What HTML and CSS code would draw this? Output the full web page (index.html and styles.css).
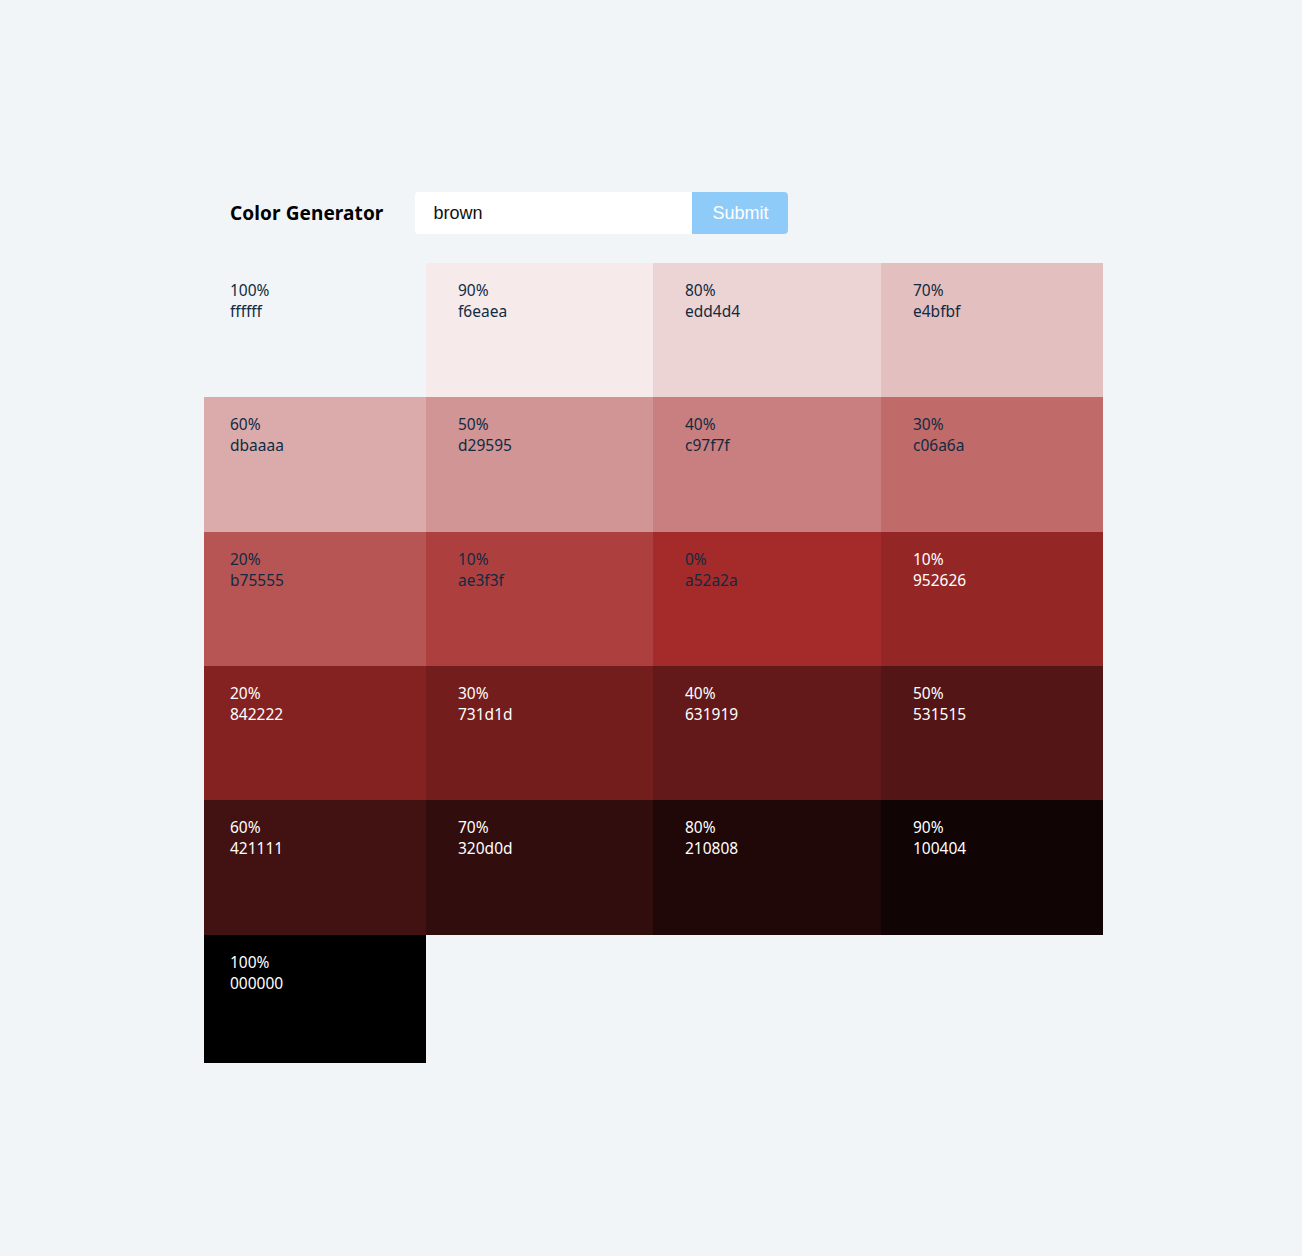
FILE: index.html
```html
<!DOCTYPE html>
<html>
<head>
<meta charset="utf-8">
<link rel="stylesheet" href="styles.css">
</head>
<body>
<main class="page">
  <section class="header">
    <h3 class="title">Color Generator</h3>
    <form class="form">
      <input class="input" type="text" value="brown">
      <button class="btn" type="button">Submit</button>
    </form>
  </section>
  <section class="colors">
    <article class="color blank"><p class="pct">100%</p><p class="hex">ffffff</p></article>
    <article class="color" style="background:#f6eaea"><p class="pct">90%</p><p class="hex">f6eaea</p></article>
    <article class="color" style="background:#edd4d4"><p class="pct">80%</p><p class="hex">edd4d4</p></article>
    <article class="color" style="background:#e4bfbf"><p class="pct">70%</p><p class="hex">e4bfbf</p></article>
    <article class="color" style="background:#dbaaaa"><p class="pct">60%</p><p class="hex">dbaaaa</p></article>
    <article class="color" style="background:#d29595"><p class="pct">50%</p><p class="hex">d29595</p></article>
    <article class="color" style="background:#c97f7f"><p class="pct">40%</p><p class="hex">c97f7f</p></article>
    <article class="color" style="background:#c06a6a"><p class="pct">30%</p><p class="hex">c06a6a</p></article>
    <article class="color" style="background:#b75555"><p class="pct">20%</p><p class="hex">b75555</p></article>
    <article class="color" style="background:#ae3f3f"><p class="pct">10%</p><p class="hex">ae3f3f</p></article>
    <article class="color" style="background:#a52a2a"><p class="pct">0%</p><p class="hex">a52a2a</p></article>
    <article class="color light" style="background:#952626"><p class="pct">10%</p><p class="hex">952626</p></article>
    <article class="color light" style="background:#842222"><p class="pct">20%</p><p class="hex">842222</p></article>
    <article class="color light" style="background:#731d1d"><p class="pct">30%</p><p class="hex">731d1d</p></article>
    <article class="color light" style="background:#631919"><p class="pct">40%</p><p class="hex">631919</p></article>
    <article class="color light" style="background:#531515"><p class="pct">50%</p><p class="hex">531515</p></article>
    <article class="color light" style="background:#421111"><p class="pct">60%</p><p class="hex">421111</p></article>
    <article class="color light" style="background:#320d0d"><p class="pct">70%</p><p class="hex">320d0d</p></article>
    <article class="color light" style="background:#210808"><p class="pct">80%</p><p class="hex">210808</p></article>
    <article class="color light" style="background:#100404"><p class="pct">90%</p><p class="hex">100404</p></article>
    <article class="color light" style="background:#000000"><p class="pct">100%</p><p class="hex">000000</p></article>
  </section>
</main>
</body>
</html>
```
FILE: styles.css
```css
* { box-sizing: border-box; }
html, body { margin: 0; padding: 0; }
body {
  background: #f1f5f8;
  font-family: "Noto Sans", "Open Sans", sans-serif;
  color: #102a42;
}
.page {
  width: 899px;
  margin-left: 204px;
  padding-top: 192px;
  padding-bottom: 193px;
}
.header {
  display: flex;
  align-items: center;
  padding-left: 26px;
  height: 42px;
}
.title {
  margin: 0 32px 0 0;
  font-size: 19px;
  font-weight: 700;
  color: #000;
  letter-spacing: 0.1px;
}
.form {
  display: flex;
  margin: 0;
}
.input {
  width: 277px;
  height: 42px;
  border: none;
  border-radius: 4px 0 0 4px;
  background: #fff;
  padding: 0 18px;
  font-family: "Liberation Sans", Arial, sans-serif;
  font-size: 18px;
  color: #111;
  outline: none;
}
.btn {
  width: 96px;
  height: 42px;
  border: none;
  border-radius: 0 4px 4px 0;
  background: #8fcbf9;
  color: #fff;
  font-family: "Liberation Sans", Arial, sans-serif;
  font-size: 18px;
  padding: 0;
}
.colors {
  margin-top: 29px;
  display: grid;
  grid-template-columns: 222px 227px 228px 222px;
  grid-template-rows: 134px 135px 134px 134px 135px 128px;
}
.color {
  margin: 0;
  padding: 17px 20px 0 32px;
  font-size: 15.5px;
  line-height: 21px;
  color: #102a42;
}
.color:nth-child(4n+1) { padding-left: 26px; }
.color p { margin: 0; }
.blank { background: transparent; }
.light { color: #fff; }
```
